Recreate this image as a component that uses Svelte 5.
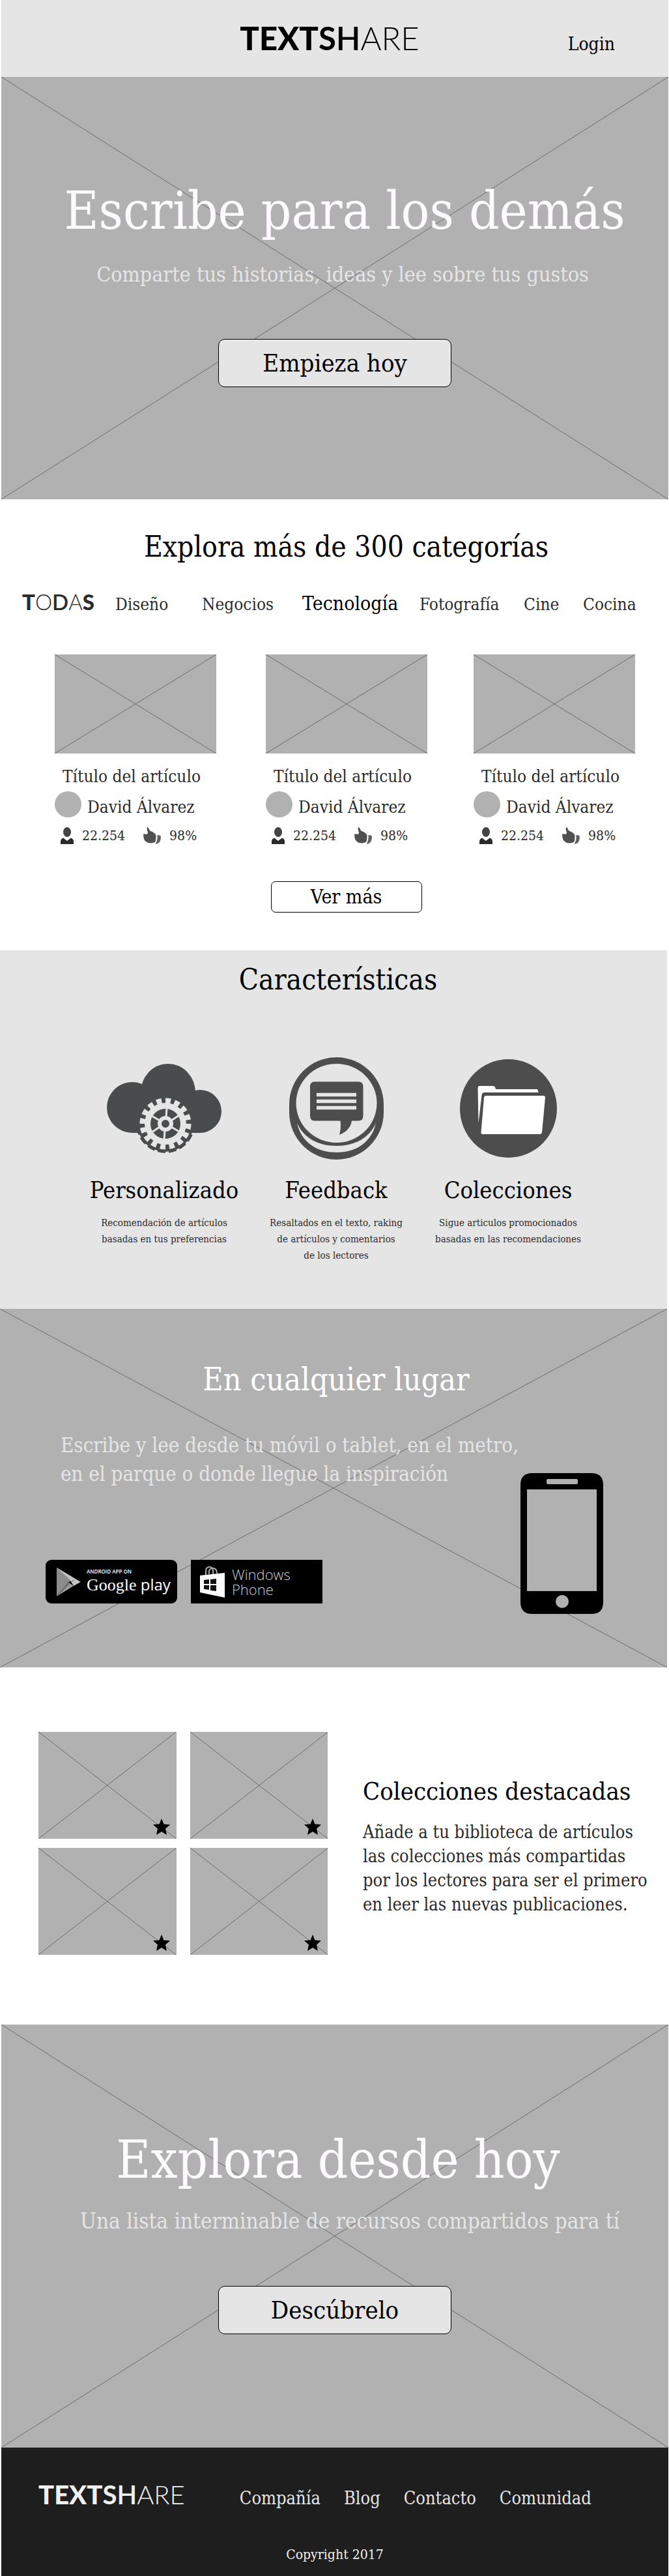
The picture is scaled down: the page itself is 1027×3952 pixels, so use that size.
<script>
  const categories = [
    { name: 'Diseño' },
    { name: 'Negocios' },
    { name: 'Tecnología', active: true },
    { name: 'Fotografía' },
    { name: 'Cine' },
    { name: 'Cocina' }
  ];

  const articles = [1, 2, 3].map((id) => ({
    id,
    title: 'Título del artículo',
    author: 'David Álvarez',
    readers: '22.254',
    likes: '98%'
  }));

  const collections = [1, 2, 3, 4];
  const footerLinks = ['Compañía', 'Blog', 'Contacto', 'Comunidad'];
</script>

{#snippet cross()}
  <svg class="cross" viewBox="0 0 100 100" preserveAspectRatio="none" aria-hidden="true">
    <path d="M0 0L100 100M100 0L0 100" vector-effect="non-scaling-stroke" />
  </svg>
{/snippet}

{#snippet brand()}
  <span class="w-black">TEXT</span><span class="w-bold">S</span><span class="w-semi">H</span><span class="w-light">ARE</span>
{/snippet}

<header class="top">
  <a class="logo" href="#inicio">{@render brand()}</a>
  <a class="login" href="#login">Login</a>
</header>

<main>
  <section class="banner" id="inicio">
    {@render cross()}
    <div class="layer">
      <h1>Escribe para los demás</h1>
      <p class="lead">Comparte tus historias, ideas y lee sobre tus gustos</p>
      <button class="cta" type="button">Empieza hoy</button>
    </div>
  </section>

  <section class="explore">
    <h2>Explora más de 300 categorías</h2>
    <nav class="categories" aria-label="Categorías">
      <a class="all" href="#todas"><span class="w-black">T</span><span class="w-light">O</span><span class="w-semi">D</span><span class="w-light">A</span><span class="w-black">S</span></a>
      {#each categories as category (category.name)}
        <a class:active={category.active} href="#{category.name}">{category.name}</a>
      {/each}
    </nav>

    <div class="articles">
      {#each articles as article (article.id)}
        <article>
          <div class="cover">{@render cross()}</div>
          <h3>{article.title}</h3>
          <div class="author"><span class="avatar"></span>{article.author}</div>
          <div class="stats">
            <svg width="21" height="26" viewBox="0 0 21 26" aria-hidden="true">
              <ellipse cx="10" cy="7.5" rx="6" ry="7.5" fill="#444" />
              <path d="M0 26V22Q0 18 4 16.500L10 21L16 16.500Q20 18 20 22V26Z" fill="#2b2b2b" />
            </svg>
            <span class="readers">{article.readers}</span>
            <svg width="28" height="26" viewBox="0 0 28 26" aria-hidden="true">
              <path d="M6 0Q8 0 9 3.500Q10 6 14 7L18 10Q20 12 19.500 15L19 21Q18 24 12 24.500Q6 24.500 4 22Q1 20 .500 16L0 11Q1 9.500 4 11Q7 11 7 8Q5 4 6 0Z" fill="#505050" />
              <path d="M21.500 12Q26 12 27 14Q27 19 25 23Q22 26 18.500 26Q21 22 21.500 18Z" fill="#606060" />
            </svg>
            <span>{article.likes}</span>
          </div>
        </article>
      {/each}
    </div>
    <div class="more-row">
      <button class="more" type="button">Ver más</button>
    </div>
  </section>

  <section class="features">
    <h2>Características</h2>
    <div class="feature-grid">
      <div class="feature">
        <div class="icon">
          <svg width="176" height="137" viewBox="0 0 176 137" aria-hidden="true">
            <g fill="#484c4c">
              <ellipse cx="94" cy="44" rx="42" ry="44" />
              <circle cx="39" cy="67" r="39" />
              <circle cx="143" cy="73" r="33" />
              <path d="M39 60L60 30H130L143 60V106H39Z" />
              <circle cx="90" cy="92" r="43" />
            </g>
            <circle cx="90" cy="92" r="43" fill="none" stroke="#484c4c" stroke-width="4" pathLength="16" stroke-dasharray=".7 .3" />
            <g fill="none" stroke="#e5e5e5">
              <circle cx="90" cy="92" r="27.5" stroke-width="9" />
              <circle cx="90" cy="92" r="35" stroke-width="9" pathLength="16" stroke-dasharray=".58 .42" />
              <circle cx="90" cy="92" r="9" stroke-width="6" />
              <path stroke-width="3" d="M91 82L92 68M89 102L88 116M81 87L69 80M99 97L111 104M99 87L111 79M81 97L69 105" />
            </g>
          </svg>
        </div>
        <h3>Personalizado</h3>
        <p>Recomendación de artículos<br />basadas en tus preferencias</p>
      </div>
      <div class="feature">
        <div class="icon">
          <svg width="145" height="157" viewBox="0 0 145 157" aria-hidden="true">
            <rect width="145" height="157" rx="72.5" fill="#4d4d4d" />
            <ellipse cx="72.5" cy="70.5" rx="62" ry="60.5" fill="#e5e5e5" />
            <path d="M12 101C22 124 45 136 72.5 136S123 124 133 101C127 129 104 146 72.5 146S18 129 12 101Z" fill="#e5e5e5" />
            <path d="M39 37.500H106.500Q113.500 37.500 113.500 45V90Q113.500 97.500 106.500 97.500H96Q94 112 77 119Q80 108 78.500 97.500H39Q32 97.500 32 90V45Q32 37.500 39 37.500Z" fill="#4d4d4d" />
            <path d="M42 57.500H103M42 67.500H103M42 77.500H103" stroke="#e5e5e5" stroke-width="5.500" />
          </svg>
        </div>
        <h3>Feedback</h3>
        <p>Resaltados en el texto, raking<br />de artículos y comentarios<br />de los lectores</p>
      </div>
      <div class="feature">
        <div class="icon">
          <svg width="149" height="151" viewBox="0 0 149 151" aria-hidden="true">
            <ellipse cx="74.500" cy="75.500" rx="74.500" ry="75.500" fill="#4d4d4d" />
            <g fill="#fff">
              <path d="M27.500 44Q27.500 41 30.500 41H51Q54 41 55 46H118Q120 46 120.500 51H38Q34 51 33.500 55L28.500 98Z" />
              <path d="M40 56H128Q131 56 131 59L126 112Q125.500 115 123 115H35Q32 115 32.500 112L37 59Q37.500 56 40 56Z" />
            </g>
          </svg>
        </div>
        <h3>Colecciones</h3>
        <p>Sigue articulos promocionados<br />basadas en las recomendaciones</p>
      </div>
    </div>
  </section>

  <section class="anywhere">
    {@render cross()}
    <div class="layer">
      <h2>En cualquier lugar</h2>
      <div class="devices">
        <div>
          <p>Escribe y lee desde tu móvil o tablet, en el metro,<br />en el parque o donde llegue la inspiración</p>
          <div class="stores">
            <a class="store play" href="#google-play">
              <svg width="37" height="44" viewBox="0 0 37 44" aria-hidden="true">
                <path d="M0 0L26 16L19 22L0 44Z" fill="#8c8c8c" />
                <path d="M0 0L37 22L26 28L19 17Z" fill="#c4c4c4" />
                <path d="M19 23L26 28L0 44Z" fill="#9e9e9e" />
                <path d="M0 44L26 19" stroke="#555" />
              </svg>
              <span class="play-name"><small>ANDROID APP ON</small><span class="play-word"><span class="google">Google</span> play</span></span>
            </a>
            <a class="store windows" href="#windows-phone">
              <svg width="38" height="48" viewBox="0 0 38 48" aria-hidden="true">
                <path d="M9 13V7Q9 1 15 1Q20 1 20 7V12M14 12V7Q15 3 20 3Q26 3 26 11" fill="none" stroke="#aaa" stroke-width="2" />
                <path d="M0 14L38 10V48L0 40Z" fill="#fff" />
                <path d="M6 21L14 20V27H6ZM16 20L25 19V27H16ZM6 29H14V36L6 35ZM16 29H25V38L16 37Z" fill="#111" />
              </svg>
              <span>Windows<br />Phone</span>
            </a>
          </div>
        </div>
        <svg class="phone" width="127" height="216" viewBox="0 0 127 216" aria-hidden="true">
          <path fill-rule="evenodd" d="M18 0H109Q127 0 127 18V198Q127 216 109 216H18Q0 216 0 198V18Q0 0 18 0ZM10 25V181H117V25ZM42 9Q40 9 40 11V15Q40 17 42 17H86Q88 17 88 15V11Q88 9 86 9ZM64 187A10 10 0 1 0 64 207A10 10 0 1 0 64 187Z" />
        </svg>
      </div>
    </div>
  </section>

  <section class="featured">
    <div class="tiles">
      {#each collections as id (id)}
        <div class="tile">
          {@render cross()}
          <svg class="star" width="26" height="25" viewBox="0 0 26 25" aria-hidden="true">
            <path d="M13 0L16.500 8.500L26 9.300L19 15.500L21 25L13 20L5 25L7 15.500L0 9.300L9.500 8.500Z" />
          </svg>
        </div>
      {/each}
    </div>
    <div class="featured-text">
      <h2>Colecciones destacadas</h2>
      <p>Añade a tu biblioteca de artículos<br />las colecciones más compartidas<br />por los lectores para ser el primero<br />en leer las nuevas publicaciones.</p>
    </div>
  </section>

  <section class="banner closing">
    {@render cross()}
    <div class="layer">
      <h2>Explora desde hoy</h2>
      <p class="lead">Una lista interminable de recursos compartidos para tí</p>
      <button class="cta" type="button">Descúbrelo</button>
    </div>
  </section>
</main>

<footer>
  <div class="footer-row">
    <a class="logo" href="#inicio">{@render brand()}</a>
    <nav aria-label="Pie de página">
      {#each footerLinks as link (link)}
        <a href="#{link}">{link}</a>
      {/each}
    </nav>
  </div>
  <p>Copyright 2017</p>
</footer>

<style>
  :global(body) {
    background: #fff;
    color: #2b2b2b;
    font-family: 'DejaVu Serif Condensed', 'DejaVu Serif', serif;
  }

  h1,
  h2,
  h3,
  p {
    margin: 0;
    font-weight: 400;
  }

  h2 {
    color: #000;
    font-size: 44px;
    line-height: 56px;
    text-align: center;
  }

  a {
    color: inherit;
    text-decoration: none;
  }

  button {
    display: block;
    padding: 0;
    border: 1px solid #000;
    color: #000;
    font-family: inherit;
    cursor: pointer;
  }

  svg {
    display: block;
    flex: none;
  }

  .w-black {
    font-weight: 900;
  }

  .w-bold {
    font-weight: 700;
  }

  .w-semi {
    font-weight: 600;
  }

  .w-light {
    font-weight: 300;
  }

  .logo {
    font-family: Lato, sans-serif;
    font-size: 49px;
    line-height: 60px;
  }

  .cross {
    position: absolute;
    inset: 0;
    width: 100%;
    height: 100%;
  }

  .cross path {
    fill: none;
    stroke: #6c6c6c;
    stroke-width: 1px;
  }

  .layer {
    position: relative;
  }

  .top {
    display: grid;
    grid-template-columns: 1fr auto 1fr;
    align-items: baseline;
    margin: 0 1px 0 2px;
    padding: 28px 82px 30px 66px;
    background: #e5e5e5;
    color: #000;
  }

  .top .logo {
    grid-column: 2;
  }

  .login {
    justify-self: end;
    font-size: 28px;
    line-height: 36px;
  }

  .banner {
    position: relative;
    margin: 0 1px 0 2px;
    padding: 155px 0 172px;
    background: #b1b1b1;
    text-align: center;
  }

  .banner h1,
  .banner h2 {
    padding-left: 30px;
    color: #fcfafc;
    font-size: 81px;
    line-height: 100px;
  }

  .lead {
    margin-top: 26px;
    padding-left: 24px;
    color: #e5e5e5;
    font-size: 32px;
    line-height: 44px;
  }

  .cta {
    width: 358px;
    height: 74px;
    margin: 77px auto 0;
    border-radius: 10px;
    background: #e5e5e5;
    font-size: 38px;
    line-height: 48px;
  }

  .closing {
    padding: 157px 0 174px;
  }

  .banner.closing h2 {
    padding-left: 10px;
  }

  .closing .lead {
    margin-top: 23px;
    padding-left: 46px;
    font-size: 33px;
  }

  .explore {
    padding: 45px 0 58px;
  }

  .explore h2,
  .more-row {
    padding-left: 36px;
  }

  .categories {
    display: grid;
    grid-template-columns: 143fr 133fr 154fr 180fr 160fr 91fr 82fr;
    align-items: baseline;
    margin-top: 36px;
    padding: 0 50px 0 34px;
    font-size: 26px;
    line-height: 40px;
  }

  .categories .all {
    font-family: Lato, sans-serif;
    font-size: 33px;
  }

  .categories .active {
    color: #000;
    font-size: 30px;
  }

  .articles {
    display: grid;
    grid-template-columns: 324fr 319fr 248fr;
    margin-top: 57px;
    padding: 0 52px 0 84px;
  }

  article {
    max-width: 248px;
    font-size: 26px;
    line-height: 32px;
  }

  .cover {
    position: relative;
    height: 152px;
    background: #b1b1b1;
  }

  article h3 {
    margin-top: 19px;
    padding-left: 12px;
    font-size: 26px;
  }

  .author {
    display: flex;
    align-items: flex-end;
    gap: 9px;
    margin-top: 7px;
  }

  .avatar {
    width: 41px;
    height: 40px;
    border-radius: 50%;
    background: #b1b1b1;
  }

  .stats {
    display: flex;
    gap: 12px;
    margin-top: 15px;
    padding-left: 9px;
    font-size: 21px;
    line-height: 26px;
  }

  .readers {
    margin-right: 16px;
  }

  .more {
    width: 232px;
    height: 48px;
    margin: 57px auto 0;
    border-radius: 7px;
    background: #fff;
    font-size: 30px;
    line-height: 40px;
  }

  .features {
    margin-right: 3px;
    padding: 17px 0 69px;
    background: #e5e5e5;
  }

  .features h2 {
    padding-left: 14px;
  }

  .feature-grid {
    display: grid;
    grid-template-columns: repeat(3, 1fr);
    margin-top: 91px;
    padding: 0 112px 0 120px;
    text-align: center;
  }

  .icon {
    display: flex;
    align-items: center;
    justify-content: center;
    height: 157px;
  }

  .feature h3 {
    margin-top: 25px;
    color: #000;
    font-size: 36px;
    line-height: 44px;
  }

  .feature p {
    margin-top: 16px;
    font-size: 15px;
    line-height: 25px;
  }

  .anywhere {
    position: relative;
    margin-right: 3px;
    padding: 78px 98px 82px 70px;
    background: #b1b1b1;
  }

  .anywhere h2 {
    padding-left: 36px;
    color: #fff;
    font-size: 48px;
    line-height: 60px;
  }

  .devices {
    display: grid;
    grid-template-columns: 1fr auto;
    margin-top: 49px;
  }

  .devices p {
    padding-left: 23px;
    color: #e5e5e5;
    font-size: 31px;
    line-height: 44px;
    white-space: nowrap;
  }

  .phone {
    margin-top: 65px;
  }

  .stores {
    display: flex;
    gap: 21px;
    margin-top: 110px;
  }

  .store {
    display: flex;
    align-items: center;
    box-sizing: border-box;
    width: 202px;
    height: 67px;
    background: #000;
    color: #fff;
    font-family: 'Open Sans', sans-serif;
  }

  .play {
    gap: 9px;
    padding-left: 17px;
    border-radius: 9px;
  }

  .play-name {
    display: flex;
    flex-direction: column;
  }

  .play-name small {
    font-size: 8px;
    font-weight: 600;
    line-height: 10px;
  }

  .play-word {
    font-size: 24px;
    line-height: 30px;
    white-space: nowrap;
  }

  .google {
    font-family: 'Liberation Serif', serif;
    font-size: 26px;
  }

  .windows {
    gap: 11px;
    padding-left: 14px;
    color: #ccc;
    font-size: 22px;
    font-weight: 300;
    line-height: 23px;
  }

  .featured {
    display: grid;
    grid-template-columns: 444px 1fr;
    column-gap: 54px;
    padding: 99px 40px 107px 59px;
  }

  .tiles {
    display: grid;
    grid-template-columns: 1fr 1fr;
    gap: 14px 21px;
  }

  .tile {
    position: relative;
    height: 164px;
    background: #b1b1b1;
  }

  .star {
    position: absolute;
    right: 10px;
    bottom: 6px;
  }

  .featured-text {
    padding-top: 67px;
    white-space: nowrap;
  }

  .featured-text h2 {
    font-size: 38px;
    line-height: 48px;
    text-align: left;
  }

  .featured-text p {
    margin-top: 20px;
    font-size: 27px;
    line-height: 37px;
  }

  footer {
    margin: 0 1px 0 2px;
    padding: 47px 57px 20px;
    background: #1e1e1e;
    color: #e5e5e5;
  }

  .footer-row {
    display: flex;
    align-items: baseline;
    gap: 84px;
  }

  footer .logo {
    color: #f0f0f0;
    font-size: 40px;
    line-height: 50px;
  }

  footer nav {
    display: flex;
    gap: 36px;
    font-size: 27px;
    line-height: 36px;
  }

  footer p {
    margin-top: 53px;
    color: #f0f0f0;
    font-size: 21px;
    line-height: 28px;
    text-align: center;
  }
</style>
